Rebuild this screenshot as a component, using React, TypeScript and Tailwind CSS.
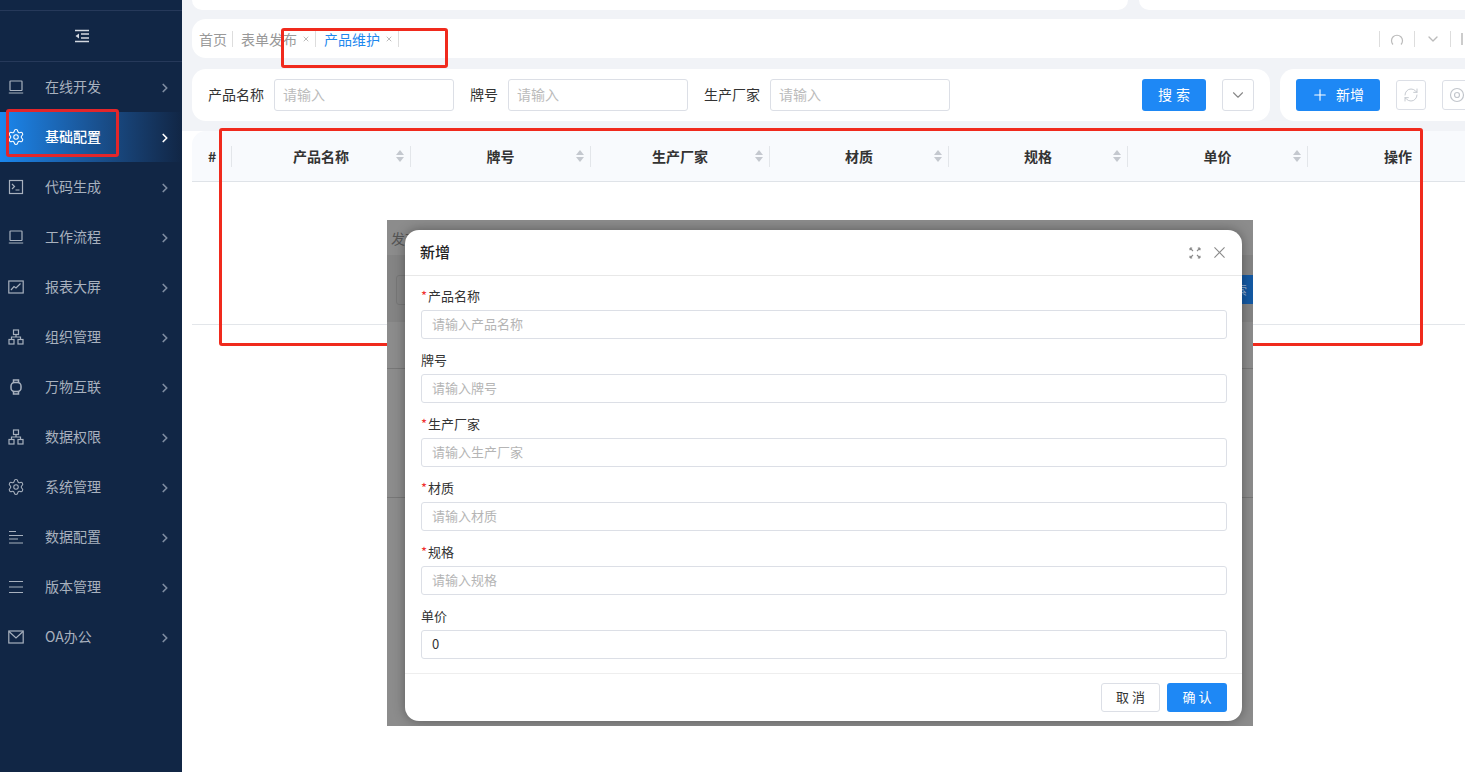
import { ChevronDown, ChevronRight, Plus, RefreshCw, Settings, X } from "lucide-react"

const font = "font-['Noto_Sans_CJK_SC','Liberation_Sans',sans-serif]"

function MonitorIcon() {
  return (
    <svg viewBox="0 0 16 16" className="w-4 h-4" fill="none" stroke="currentColor" strokeWidth="1.2">
      <rect x="2" y="2" width="12" height="9.5" rx="0.5" />
      <path d="M0.8 14h14.4M2 11.5h12" />
    </svg>
  )
}

function GearIcon() {
  return <Settings className="w-[18px] h-[18px] shrink-0" strokeWidth={1.4} />
}

function TerminalIcon() {
  return (
    <svg viewBox="0 0 16 16" className="w-4 h-4" fill="none" stroke="currentColor" strokeWidth="1.2">
      <rect x="1.5" y="1.5" width="13" height="13" />
      <path d="M4 5l2.5 2.5L4 10M7.5 11h4" />
    </svg>
  )
}

function ChartIcon() {
  return (
    <svg viewBox="0 0 16 16" className="w-4 h-4" fill="none" stroke="currentColor" strokeWidth="1.2">
      <rect x="0.8" y="2" width="14.4" height="12" />
      <path d="M3 11l3-3.5 2 1.5 4.5-4.5" />
    </svg>
  )
}

function OrgIcon() {
  return (
    <svg viewBox="0 0 16 16" className="w-4 h-4" fill="none" stroke="currentColor" strokeWidth="1.2">
      <rect x="5.5" y="1" width="5" height="4.5" />
      <rect x="1" y="10.5" width="5" height="4.5" />
      <rect x="10" y="10.5" width="5" height="4.5" />
      <path d="M8 5.5V8M3.5 10.5V8h9v2.5" />
    </svg>
  )
}

function WatchIcon() {
  return (
    <svg viewBox="0 0 16 16" className="w-4 h-4" fill="none" stroke="currentColor" strokeWidth="1.5">
      <rect x="3" y="3.5" width="10" height="9" rx="3.5" />
      <path d="M5.5 3.5V1h5v2.5M5.5 12.5V15h5v-2.5" />
    </svg>
  )
}

function BarsLeftIcon() {
  return (
    <svg viewBox="0 0 16 16" className="w-4 h-4" fill="none" stroke="currentColor" strokeWidth="1.2">
      <path d="M1 2.5h7M1 6.5h14M1 10h9M1 14h14" />
    </svg>
  )
}

function MenuIcon() {
  return (
    <svg viewBox="0 0 16 16" className="w-4 h-4" fill="none" stroke="currentColor" strokeWidth="1.2">
      <path d="M1 2.5h14M1 8h14M1 13.5h14" />
    </svg>
  )
}

function MailIcon() {
  return (
    <svg viewBox="0 0 16 16" className="w-4 h-4" fill="none" stroke="currentColor" strokeWidth="1.2">
      <rect x="0.8" y="2" width="14.4" height="12" />
      <path d="M1 2.5L8 9l7-6.5" />
    </svg>
  )
}

const menus = [
  { name: "在线开发", icon: <MonitorIcon /> },
  { name: "基础配置", icon: <GearIcon />, active: true },
  { name: "代码生成", icon: <TerminalIcon /> },
  { name: "工作流程", icon: <MonitorIcon /> },
  { name: "报表大屏", icon: <ChartIcon /> },
  { name: "组织管理", icon: <OrgIcon /> },
  { name: "万物互联", icon: <WatchIcon /> },
  { name: "数据权限", icon: <OrgIcon /> },
  { name: "系统管理", icon: <GearIcon /> },
  { name: "数据配置", icon: <BarsLeftIcon /> },
  { name: "版本管理", icon: <MenuIcon /> },
  { name: "OA办公", icon: <MailIcon /> },
]

const columns = [
  { name: "产品名称", w: "w-[179px]" },
  { name: "牌号", w: "w-[180px]" },
  { name: "生产厂家", w: "w-[179px]" },
  { name: "材质", w: "w-[179px]" },
  { name: "规格", w: "w-[179px]" },
  { name: "单价", w: "w-[180px]" },
]

const fields = [
  { label: "产品名称", required: true, placeholder: "请输入产品名称" },
  { label: "牌号", placeholder: "请输入牌号" },
  { label: "生产厂家", required: true, placeholder: "请输入生产厂家" },
  { label: "材质", required: true, placeholder: "请输入材质" },
  { label: "规格", required: true, placeholder: "请输入规格" },
  { label: "单价", value: "0" },
]

function SortCaret() {
  return (
    <span className="flex flex-col gap-[2px] justify-self-end mr-[6px]">
      <span className="w-0 h-0 border-x-[4.5px] border-x-transparent border-b-[5px] border-b-[#c4c8cf]" />
      <span className="w-0 h-0 border-x-[4.5px] border-x-transparent border-t-[5px] border-t-[#c4c8cf]" />
    </span>
  )
}

function SearchField({ label, labelW }: { label: string; labelW: string }) {
  return (
    <div className="flex items-center gap-[10px]">
      <span className={`${labelW} pb-[2px] text-[14px] text-[#333]`}>{label}</span>
      <div className="w-[180px] h-8 border border-[#dcdfe6] rounded-[3px] pl-2 pb-[2px] flex items-center text-[14px] text-[#bbb]">请输入</div>
    </div>
  )
}

export default function App() {
  return (
    <div className={`${font} w-[1465px] h-[772px] overflow-hidden flex bg-white relative`}>
      <aside className="w-[182px] shrink-0 bg-[#112645] flex flex-col">
        <div className="h-[52px] mt-[10px] border-y border-[#26395a] flex items-center justify-center pr-[18px] text-[#d3d8e0]">
          <svg viewBox="0 0 16 14" className="w-4 h-[14px]" fill="none" stroke="currentColor" strokeWidth="1.3">
            <path d="M1 1.5h14M7 5h8M7 9h8M1 12.5h14" />
            <path d="M5 4.5L1.5 7 5 9.5z" fill="currentColor" stroke="none" />
          </svg>
        </div>
        <nav>
          {menus.map((m) => (
            <div
              key={m.name}
              className={`h-[50px] pl-2 pr-[10px] flex items-center text-[14px] ${m.active ? "bg-linear-to-r from-[#1a87ee] to-[#112645] text-white font-medium" : "text-[#a8b1be]"}`}
            >
              <span className="w-4 h-4 flex items-center justify-center">{m.icon}</span>
              <span className="ml-[21px] flex-1 pb-[2px]">{m.name}</span>
              <ChevronRight className={`w-3.5 h-3.5 mt-[2px] ${m.active ? "text-white" : "text-[#7d8ba0]"}`} strokeWidth={3} />
            </div>
          ))}
        </nav>
      </aside>

      <main className="flex-1 min-w-0 bg-white">
        <div className="bg-[#f1f3f7] w-full h-[131px] pl-[10px] flex flex-col">
          <div className="flex gap-[11px] h-[10px] shrink-0">
            <div className="w-[936px] bg-white rounded-b-[14px]" />
            <div className="flex-1 bg-white rounded-bl-[14px]" />
          </div>
          <div className="mt-[9px] h-[39px] bg-white rounded-l-[14px] flex items-center pl-[7px] text-[14px] text-[#999]">
            <span className="pr-[5px] border-r border-[#ddd] leading-[16px]">首页</span>
            <span className="pl-2 pr-[5px] border-r border-[#ddd] leading-[16px] flex items-center gap-[5px]">
              表单发布 <X className="w-2 h-2" strokeWidth={2} />
            </span>
            <span className="pl-2 pr-[5px] border-r border-[#ddd] leading-[16px] flex items-center gap-[5px] text-[#1e88ee]">
              产品维护 <X className="w-2 h-2 text-[#999]" strokeWidth={2} />
            </span>
            <div className="ml-auto flex items-center text-[#bbb]">
              <span className="w-9 h-4 border-x border-[#ddd] flex items-center justify-center">
                <svg viewBox="0 0 14 14" className="w-3.5 h-3.5" fill="none" stroke="currentColor" strokeWidth="1.2">
                  <path d="M3 12.5A5.5 5.5 0 1 1 11 12.5" />
                </svg>
              </span>
              <span className="w-9 h-4 border-r border-[#ddd] flex items-center justify-center">
                <ChevronDown className="w-4 h-4" />
              </span>
              <span className="w-[4px] h-3 border-l-2 border-[#ccc] ml-[10px]" />
            </div>
          </div>
          <div className="mt-[11px] flex gap-[10px]">
            <div className="w-[1078px] h-[52px] bg-white rounded-[14px] flex items-center pl-4 pr-4">
              <SearchField label="产品名称" labelW="w-[56px]" />
              <div className="ml-4">
                <SearchField label="牌号" labelW="w-[28px]" />
              </div>
              <div className="ml-4">
                <SearchField label="生产厂家" labelW="w-[56px]" />
              </div>
              <button className="ml-auto w-16 h-8 rounded-[3px] bg-[#1e88f5] text-white text-[14px] tracking-[4px] pl-[4px] pb-[2px]">搜索</button>
              <button className="ml-4 w-8 h-8 rounded-[3px] border border-[#dcdfe6] flex items-center justify-center text-[#888]">
                <ChevronDown className="w-[18px] h-[18px]" strokeWidth={1.5} />
              </button>
            </div>
            <div className="flex-1 h-[52px] bg-white rounded-l-[14px] flex items-center pl-4 overflow-hidden">
              <button className="w-[84px] h-8 shrink-0 rounded-[3px] bg-[#1e88f5] text-white text-[14px] flex items-center justify-center gap-[7px] pr-[1px]">
                <Plus className="w-[18px] h-[18px]" strokeWidth={1.5} />
                <span className="pb-[2px]">新增</span>
              </button>
              <span className="ml-4 w-[30px] h-[30px] shrink-0 rounded-[3px] border border-[#dcdfe6] flex items-center justify-center text-[#c2c6cc]">
                <RefreshCw className="w-4 h-4" strokeWidth={1.4} />
              </span>
              <span className="ml-4 w-[30px] h-[30px] shrink-0 rounded-[3px] border border-[#dcdfe6] flex items-center justify-center text-[#c2c6cc]">
                <svg viewBox="0 0 16 16" className="w-4 h-4" fill="none" stroke="currentColor" strokeWidth="1.2">
                  <circle cx="8" cy="8" r="6.5" />
                  <circle cx="8" cy="8" r="2.5" />
                </svg>
              </span>
            </div>
          </div>
        </div>

        <div className="ml-[10px]">
          <div className="h-[51px] bg-[#f8fafd] border-b border-[#dfe3e8] rounded-tl-[14px] flex items-center text-[14px] font-bold text-[#333]">
            <div className="w-[40px] pl-4 h-[21px] flex items-center border-r border-[#e3e6ea]">#</div>
            {columns.map((c) => (
              <div key={c.name} className={`${c.w} h-[21px] grid grid-cols-[1fr_auto_1fr] items-center border-r border-[#e3e6ea]`}>
                <span />
                <span>{c.name}</span>
                <SortCaret />
              </div>
            ))}
            <div className="w-[104px] text-right">操作</div>
          </div>
          <div className="h-[143px] border-b border-[#e3e6ea]" />
        </div>
      </main>

      {/* annotation boxes drawn on top of the screenshot */}
      <div className="absolute left-[281px] top-[28px] w-[167px] h-[40px] border-[3px] border-[#f02a1d] rounded-[3px]" />
      <div className="absolute left-[6px] top-[109px] w-[113px] h-[48px] border-[3px] border-[#e4262a] rounded-[3px]" />
      <div className="absolute left-[219px] top-[128px] w-[1204px] h-[218px] border-[3px] border-[#f02a1d] rounded-[3px]" />

      {/* pasted dialog screenshot */}
      <div className="absolute left-[387px] top-[220px] w-[866px] h-[506px] bg-[#8c8c8c] overflow-hidden">
        <div className="absolute left-[4px] top-[8px] text-[14px] text-[#555]">发布</div>
        <div className="absolute left-0 top-[35px] w-full h-[67px] bg-[#848484]" />
        <div className="absolute left-[9px] top-[55px] w-[30px] h-[30px] rounded-[3px] border border-[#777]" />
        <div className="absolute right-0 top-[55px] w-[40px] h-[29px] bg-[#1459a3] text-right pr-[6px] text-[12px] text-[#9db7d6] leading-[29px]">索</div>
        <div className="absolute left-0 top-[148px] w-full h-px bg-[#777]" />
        <div className="absolute left-0 top-[277px] w-full h-px bg-[#777]" />
        <div className="absolute left-[18px] top-[10px] w-[837px] h-[491px] bg-white rounded-[14px] shadow-[0_0_12px_rgba(0,0,0,0.35)] flex flex-col">
          <div className="h-[46px] shrink-0 border-b border-[#e8e8e8] pl-[15px] pr-[17px] flex items-center">
            <span className="text-[15px] font-medium text-[#222]">新增</span>
            <svg viewBox="0 0 12 12" className="ml-auto w-3 h-3 text-[#8a8a8a]" fill="none" stroke="currentColor" strokeWidth="1.1">
              <path d="M1 1l3 3M1 1h2.2M1 1v2.2M11 1L8 4M11 1H8.8M11 1v2.2M1 11l3-3M1 11h2.2M1 11V8.8M11 11L8 8M11 11H8.8M11 11V8.8" />
            </svg>
            <svg viewBox="0 0 12 12" className="ml-[13px] w-[11px] h-[11px] text-[#8a8a8a]" fill="none" stroke="currentColor" strokeWidth="1.2">
              <path d="M0.5 0.5l11 11M11.5 0.5l-11 11" />
            </svg>
          </div>
          <div className="flex-1 pl-[16px] pr-[15px] pt-[8px]">
            {fields.map((f) => (
              <div key={f.label} className="h-[64px]">
                <div className="h-[26px] pb-[2px] flex items-center text-[13px] text-[#333]">
                  {f.required && <span className="w-[7px] text-[#f03030]">*</span>}
                  {f.label}
                </div>
                <div className={`h-[29px] border border-[#dcdfe6] rounded-[3px] pl-[10px] pb-px flex items-center text-[13px] ${f.value ? "text-[#333]" : "text-[#b5b5b5]"}`}>
                  {f.value ?? f.placeholder}
                </div>
              </div>
            ))}
          </div>
          <div className="h-[48px] shrink-0 border-t border-[#eee] flex items-center justify-end gap-[7px] pr-[15px]">
            <button className="w-[59px] h-[29px] rounded-[3px] border border-[#dcdfe6] text-[13px] text-[#333] tracking-[3px] pl-[3px] pb-px">取消</button>
            <button className="w-[60px] h-[29px] rounded-[3px] bg-[#1e88f5] text-[13px] text-white tracking-[3px] pl-[3px] pb-px">确认</button>
          </div>
        </div>
      </div>
    </div>
  )
}
